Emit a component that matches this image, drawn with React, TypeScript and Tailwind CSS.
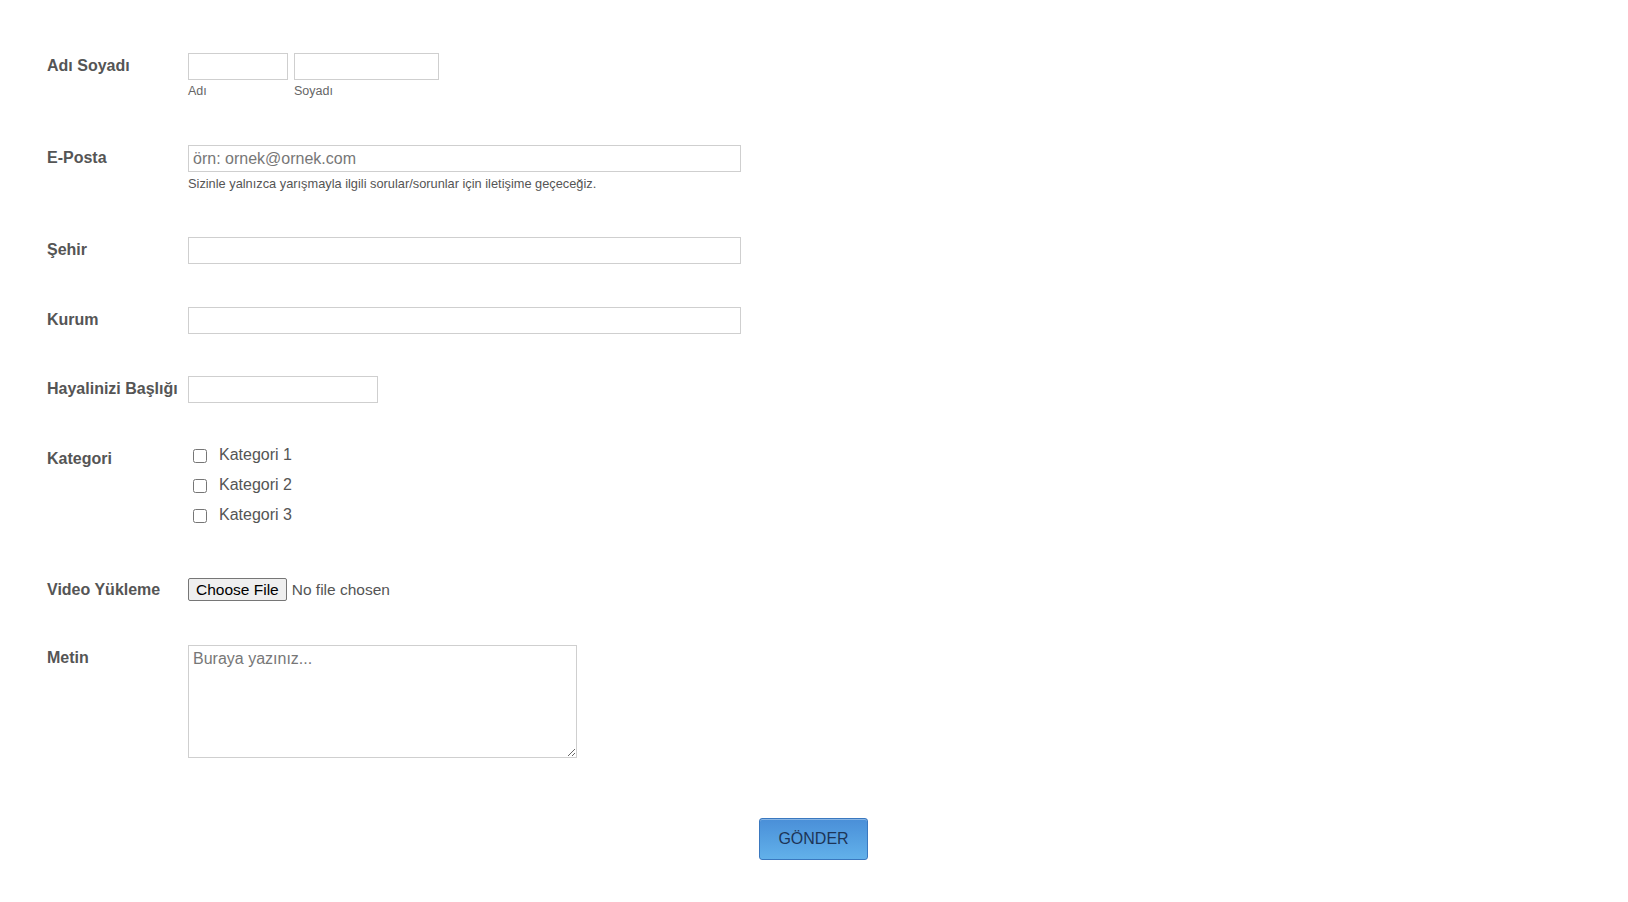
import React from "react";

const inputCls =
  "h-[27px] border border-[#cfcfcf] bg-white px-[4px] text-[16px] text-[#333] placeholder:text-[#777] outline-none";

function Row({
  label,
  children,
  className = "",
  labelPad = "pt-[3px]",
}: {
  label: string;
  children: React.ReactNode;
  className?: string;
  labelPad?: string;
}) {
  return (
    <div className={`flex items-start ${className}`}>
      <label
        className={`w-[141px] shrink-0 text-[16px] font-bold leading-[19px] text-[#555] ${labelPad}`}
      >
        {label}
      </label>
      <div className="flex-1">{children}</div>
    </div>
  );
}

export default function App() {
  const kategoriler = ["Kategori 1", "Kategori 2", "Kategori 3"];

  return (
    <main
      className="min-h-[902px] bg-white pl-[47px] pt-[53px]"
      style={{ fontFamily: '"Liberation Sans", Arial, sans-serif' }}
    >
      <form className="flex flex-col" onSubmit={(e) => e.preventDefault()}>
        {/* Adı Soyadı */}
        <Row label="Adı Soyadı">
          <div className="flex gap-[6px]">
            <div className="flex flex-col">
              <input type="text" className={`${inputCls} w-[100px]`} />
              <span className="mt-[4px] text-[12.5px] leading-[14px] text-[#666]">Adı</span>
            </div>
            <div className="flex flex-col">
              <input type="text" className={`${inputCls} w-[145px]`} />
              <span className="mt-[4px] text-[12.5px] leading-[14px] text-[#666]">Soyadı</span>
            </div>
          </div>
        </Row>

        {/* E-Posta */}
        <Row label="E-Posta" className="mt-[47px]">
          <input
            type="email"
            placeholder="örn: ornek@ornek.com"
            className={`${inputCls} w-[553px]`}
          />
          <p className="mt-[5px] text-[12.8px] leading-[14px] text-[#555]">
            Sizinle yalnızca yarışmayla ilgili sorular/sorunlar için iletişime geçeceğiz.
          </p>
        </Row>

        {/* Şehir */}
        <Row label="Şehir" className="mt-[46px]">
          <input type="text" className={`${inputCls} w-[553px]`} />
        </Row>

        {/* Kurum */}
        <Row label="Kurum" className="mt-[43px]">
          <input type="text" className={`${inputCls} w-[553px]`} />
        </Row>

        {/* Hayalinizi Başlığı */}
        <Row label="Hayalinizi Başlığı" className="mt-[42px]">
          <input type="text" className={`${inputCls} w-[190px]`} />
        </Row>

        {/* Kategori */}
        <Row label="Kategori" className="mt-[42px]" labelPad="pt-[4px]">
          <div className="flex flex-col">
            {kategoriler.map((k) => (
              <label key={k} className="flex h-[30px] items-start">
                <input
                  type="checkbox"
                  className="ml-[5px] mt-[4px] h-[14px] w-[14px]"
                />
                <span className="ml-[12px] text-[16px] leading-[19px] text-[#555]">{k}</span>
              </label>
            ))}
          </div>
        </Row>

        {/* Video Yükleme */}
        <Row label="Video Yükleme" className="mt-[43px]" labelPad="pt-[2px]">
          <label className="inline-flex items-center text-[15.5px] leading-[19px]">
            <span className="h-[23px] rounded-[2px] border border-[#767676] bg-[#efefef] px-[7px] leading-[21px] text-black">
              Choose File
            </span>
            <span className="ml-[5px] text-[#555]">No file chosen</span>
            <input type="file" className="hidden" />
          </label>
        </Row>

        {/* Metin */}
        <Row label="Metin" className="mt-[43px]">
          <textarea
            placeholder="Buraya yazınız..."
            className="h-[113px] w-[389px] border border-[#cfcfcf] bg-white px-[4px] py-[3px] text-[16px] leading-[19px] text-[#333] placeholder:text-[#777] outline-none"
          />
        </Row>

        {/* Gönder */}
        <div className="mt-[53px] flex pl-[712px]">
          <button
            type="submit"
            className="h-[42px] w-[109px] rounded-[3px] border border-[#3a78bf] bg-gradient-to-b from-[#4a8fd8] to-[#62b1ea] text-[16px] text-[#1d3557] shadow-[inset_0_1px_0_rgba(255,255,255,0.35)]"
          >
            GÖNDER
          </button>
        </div>
      </form>
    </main>
  );
}
